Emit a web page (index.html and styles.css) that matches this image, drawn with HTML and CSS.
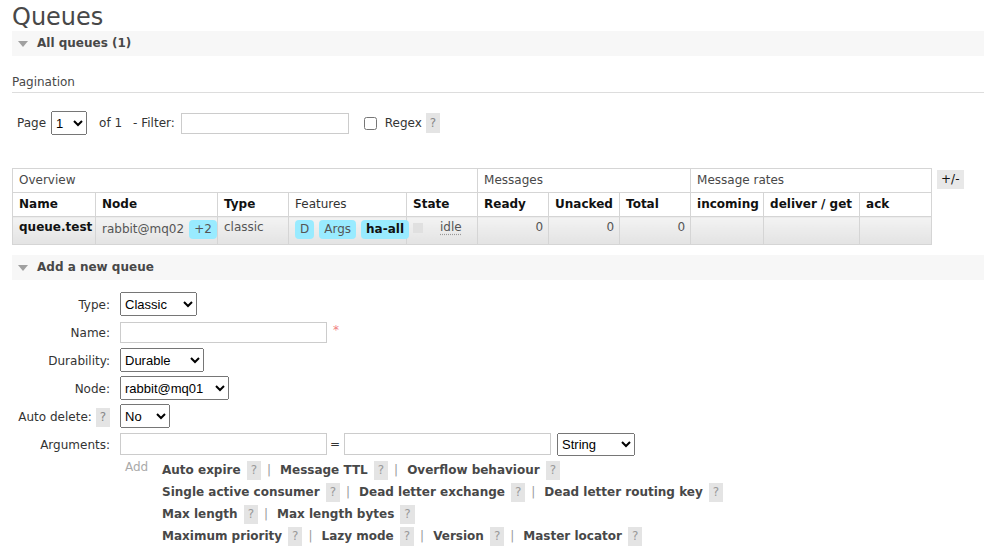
FILE: index.html
```html
<!DOCTYPE html>
<html>
<head>
<meta charset="utf-8">
<title>Queues</title>
<link rel="stylesheet" href="styles.css">
</head>
<body>
<div class="main">
  <h1 class="title">Queues</h1>

  <div class="section">
    <h2 class="sec-head"><span class="tri"></span>All queues (1)</h2>
    <div class="sec-body">
      <h3 class="pag-title">Pagination</h3>
      <div class="pager">
        <span class="pg-label">Page</span>
        <select class="sel sel-page"><option>1</option></select>
        <span class="pg-of">of 1</span>
        <span class="pg-filter">- Filter:</span>
        <input class="txt filter" type="text">
        <input class="chk" type="checkbox">
        <span class="pg-regex">Regex</span>
        <span class="help">?</span>
      </div>

      <div class="table-wrap">
        <table class="list">
          <colgroup>
            <col class="c-name"><col class="c-node"><col class="c-type"><col class="c-feat"><col class="c-state">
            <col class="c-num"><col class="c-num"><col class="c-num">
            <col class="c-inc"><col class="c-del"><col class="c-ack">
          </colgroup>
          <thead>
            <tr class="group-row">
              <th colspan="5">Overview</th>
              <th colspan="3">Messages</th>
              <th colspan="3">Message rates</th>
            </tr>
            <tr class="head-row">
              <th>Name</th><th>Node</th><th>Type</th><th class="light">Features</th><th>State</th>
              <th>Ready</th><th>Unacked</th><th>Total</th>
              <th>incoming</th><th>deliver / get</th><th>ack</th>
            </tr>
          </thead>
          <tbody>
            <tr class="data-row">
              <td class="q-name">queue.test</td>
              <td>rabbit@mq02<span class="badge gap-left">+2</span></td>
              <td>classic</td>
              <td><span class="badge">D</span><span class="badge">Args</span><span class="badge strong">ha-all</span></td>
              <td><span class="status"></span><abbr class="idle">idle</abbr></td>
              <td class="num">0</td>
              <td class="num">0</td>
              <td class="num">0</td>
              <td></td><td></td><td></td>
            </tr>
          </tbody>
        </table>
        <span class="toggle">+/-</span>
      </div>
    </div>
  </div>

  <div class="section">
    <h2 class="sec-head"><span class="tri"></span>Add a new queue</h2>
    <div class="form">
      <label class="lbl">Type:</label>
      <div class="ctl"><select class="sel w-type"><option>Classic</option></select></div>

      <label class="lbl">Name:</label>
      <div class="ctl"><input class="txt w-name" type="text"><span class="req">*</span></div>

      <label class="lbl">Durability:</label>
      <div class="ctl"><select class="sel w-dur"><option>Durable</option></select></div>

      <label class="lbl">Node:</label>
      <div class="ctl"><select class="sel w-node"><option>rabbit@mq01</option></select></div>

      <label class="lbl">Auto delete: <span class="help">?</span></label>
      <div class="ctl"><select class="sel w-auto"><option>No</option></select></div>

      <label class="lbl">Arguments:</label>
      <div class="ctl">
        <input class="txt w-arg" type="text"><span class="eq">=</span><input class="txt w-arg" type="text">
        <select class="sel w-str"><option>String</option></select>
      </div>

      <div class="add-row">
        <span class="add">Add</span>
        <div class="arg-links">
          <div class="line"><span class="lk">Auto expire</span><span class="help">?</span><span class="sep">|</span><span class="lk">Message TTL</span><span class="help">?</span><span class="sep">|</span><span class="lk">Overflow behaviour</span><span class="help">?</span></div>
          <div class="line"><span class="lk">Single active consumer</span><span class="help">?</span><span class="sep">|</span><span class="lk">Dead letter exchange</span><span class="help">?</span><span class="sep">|</span><span class="lk">Dead letter routing key</span><span class="help">?</span></div>
          <div class="line"><span class="lk">Max length</span><span class="help">?</span><span class="sep">|</span><span class="lk">Max length bytes</span><span class="help">?</span></div>
          <div class="line"><span class="lk">Maximum priority</span><span class="help">?</span><span class="sep">|</span><span class="lk">Lazy mode</span><span class="help">?</span><span class="sep">|</span><span class="lk">Version</span><span class="help">?</span><span class="sep">|</span><span class="lk">Master locator</span><span class="help">?</span></div>
        </div>
      </div>
    </div>
  </div>
</div>
</body>
</html>
```

FILE: styles.css
```css
html, body {
  margin: 0;
  padding: 0;
  background: #fff;
}
body {
  font-family: "DejaVu Sans", Verdana, sans-serif;
  font-size: 12px;
  line-height: 15px;
  color: #484848;
}
.main {
  padding-left: 12px;
}
.title {
  margin: 4px 0 0 0;
  font-size: 24px;
  line-height: 27px;
  font-weight: normal;
  color: #484848;
}

/* section headers */
.sec-head {
  margin: 0;
  height: 25px;
  display: flex;
  align-items: center;
  background: #f7f7f7;
  font-size: 12px;
  font-weight: bold;
  color: #484848;
}
.tri {
  width: 0;
  height: 0;
  border-left: 5px solid transparent;
  border-right: 5px solid transparent;
  border-top: 6px solid #a0a0a0;
  margin: 1px 9px 0 6px;
}

/* pagination */
.pag-title {
  margin: 19px 0 0 0;
  padding-bottom: 2px;
  font-size: 12px;
  font-weight: normal;
  border-bottom: 1px solid #dddddd;
  color: #484848;
}
.pager {
  margin-top: 18px;
  height: 24px;
  display: flex;
  align-items: center;
  padding-left: 5px;
  color: #333;
}
.sel {
  font-family: "Liberation Sans", Arial, sans-serif;
  font-size: 13px;
  height: 24px;
  color: #000;
  margin: 0;
}
.sel-page {
  width: 36px;
  margin-left: 5px;
}
.pg-of { margin-left: 12px; }
.pg-filter { margin-left: 11px; }
.txt {
  margin: 0;
  box-sizing: border-box;
  height: 21px;
  border: 1px solid #cccccc;
  padding: 1px 3px;
  font-family: "Liberation Sans", Arial, sans-serif;
  font-size: 13px;
  background: #fff;
}
.filter {
  width: 168px;
  margin-left: 6px;
}
.chk {
  width: 13px;
  height: 13px;
  margin: 0 0 0 15px;
}
.pg-regex { margin-left: 8px; }
.help {
  display: inline-block;
  background: #e4e4e4;
  color: #888;
  padding: 2px 4px;
  line-height: 15px;
  font-weight: normal;
}
.pager .help { margin-left: 4px; padding: 3px 4px 2px 4px; }

/* table */
.table-wrap {
  margin-top: 33px;
  display: flex;
  align-items: flex-start;
  gap: 5px;
}
.list {
  border-collapse: collapse;
  table-layout: fixed;
  width: 919px;
  border: 1px solid #d5d5d5;
}
.c-name { width: 83px; }
.c-node { width: 122px; }
.c-type { width: 71px; }
.c-feat { width: 118px; }
.c-state { width: 71px; }
.c-num { width: 71px; }
.c-inc { width: 73px; }
.c-del { width: 96px; }
.c-ack { width: 72px; }
.list th, .list td {
  border: 1px solid #d5d5d5;
  text-align: left;
  white-space: nowrap;
}
.list th {
  padding: 4px 6px;
  line-height: 15px;
  height: 15px;
}
.group-row th {
  font-weight: normal;
  color: #484848;
}
.head-row th {
  font-weight: bold;
  color: #111;
}
.head-row th.light {
  font-weight: normal;
  color: #333;
}
.data-row td {
  background: linear-gradient(to bottom, #f3f3f3, #e3e3e3);
  padding: 3px 6px 5px 6px;
  vertical-align: top;
  color: #555;
}
.data-row td.q-name {
  font-weight: bold;
  color: #111;
}
.data-row td.num {
  text-align: right;
  padding-right: 5px;
}
.badge {
  display: inline-block;
  background: #99ebff;
  border-radius: 4px;
  padding: 2px 5px;
  line-height: 15px;
  margin-right: 5px;
  color: #555;
}
.badge.gap-left { margin-left: 5px; margin-right: 0; }
.badge.strong {
  font-weight: bold;
  color: #111;
  margin-right: 0;
}
.status {
  display: inline-block;
  width: 10px;
  height: 10px;
  background: #e0e0e0;
  margin: 3px 17px 0 0;
  vertical-align: top;
}
.idle {
  text-decoration: underline dotted #999;
  text-underline-offset: 3px;
  color: #555;
}
.toggle {
  margin-top: 2px;
  background: #e8e8e8;
  color: #111;
  padding: 2px 4px;
  line-height: 15px;
}

.section + .section {
  margin-top: 10px;
}

/* form */
.form {
  margin-top: 10px;
  display: grid;
  grid-template-columns: 98px 1fr;
  grid-template-rows: 28px 28px 28px 28px 28px 28px auto;
  column-gap: 10px;
  align-items: center;
}
.lbl {
  justify-self: end;
  color: #333;
  padding-top: 2px;
}
.ctl {
  display: flex;
  align-items: center;
}
.w-type { width: 77px; }
.w-dur { width: 84px; }
.w-node { width: 109px; }
.w-auto { width: 50px; }
.w-str { width: 78px; height: 23px; margin-left: 6px; }
.w-name { width: 207px; }
.w-arg { width: 207px; height: 22px; }
.req {
  color: #f08080;
  margin-left: 6px;
  align-self: flex-start;
  margin-top: 1px;
}
.eq {
  margin: 0 4px 0 3px;
  color: #333;
}
.add-row {
  grid-column: 2;
  display: flex;
  align-items: flex-start;
  margin-top: 1px;
}
.add {
  width: 37px;
  padding-left: 5px;
  color: #aaa;
  line-height: 15px;
  padding-top: 1px;
}
.arg-links {
  display: flex;
  flex-direction: column;
}
.line {
  height: 22px;
  display: flex;
  align-items: center;
}
.lk {
  font-weight: bold;
  color: #484848;
}
.line .help {
  margin-left: 6px;
  color: #999;
}
.sep {
  color: #999;
  margin: 0 9px 0 6px;
}
```
